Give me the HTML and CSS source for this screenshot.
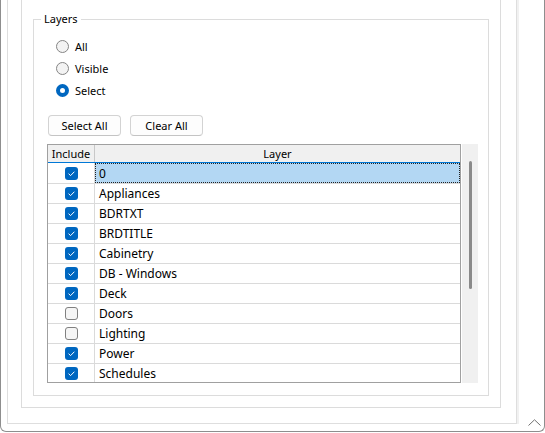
FILE: index.html
```html
<!DOCTYPE html>
<html>
<head>
<meta charset="utf-8">
<link rel="stylesheet" href="styles.css">
</head>
<body>
<div class="window">
  <div class="panel">
    <div class="inner">
      <fieldset class="group">
        <legend>Layers</legend>
        <div class="gbody">
          <div class="radios">
            <label class="radio"><span class="rb"></span>All</label>
            <label class="radio"><span class="rb"></span>Visible</label>
            <label class="radio"><span class="rb on"></span>Select</label>
          </div>
          <div class="buttons">
            <button class="btn">Select All</button>
            <button class="btn">Clear All</button>
          </div>
          <div class="grid">
            <div class="table">
              <div class="row head"><div class="c1">Include</div><div class="c2">Layer</div></div>
              <div class="row first"><div class="c1"><span class="cb on"><svg viewBox="0 0 13 13"><polyline points="3.6,6.7 5.6,8.6 9.4,4.7"/></svg></span></div><div class="c2 sel">0</div></div>
              <div class="row"><div class="c1"><span class="cb on"><svg viewBox="0 0 13 13"><polyline points="3.6,6.7 5.6,8.6 9.4,4.7"/></svg></span></div><div class="c2">Appliances</div></div>
              <div class="row"><div class="c1"><span class="cb on"><svg viewBox="0 0 13 13"><polyline points="3.6,6.7 5.6,8.6 9.4,4.7"/></svg></span></div><div class="c2">BDRTXT</div></div>
              <div class="row"><div class="c1"><span class="cb on"><svg viewBox="0 0 13 13"><polyline points="3.6,6.7 5.6,8.6 9.4,4.7"/></svg></span></div><div class="c2">BRDTITLE</div></div>
              <div class="row"><div class="c1"><span class="cb on"><svg viewBox="0 0 13 13"><polyline points="3.6,6.7 5.6,8.6 9.4,4.7"/></svg></span></div><div class="c2">Cabinetry</div></div>
              <div class="row"><div class="c1"><span class="cb on"><svg viewBox="0 0 13 13"><polyline points="3.6,6.7 5.6,8.6 9.4,4.7"/></svg></span></div><div class="c2">DB - Windows</div></div>
              <div class="row"><div class="c1"><span class="cb on"><svg viewBox="0 0 13 13"><polyline points="3.6,6.7 5.6,8.6 9.4,4.7"/></svg></span></div><div class="c2">Deck</div></div>
              <div class="row"><div class="c1"><span class="cb"></span></div><div class="c2">Doors</div></div>
              <div class="row"><div class="c1"><span class="cb"></span></div><div class="c2">Lighting</div></div>
              <div class="row"><div class="c1"><span class="cb on"><svg viewBox="0 0 13 13"><polyline points="3.6,6.7 5.6,8.6 9.4,4.7"/></svg></span></div><div class="c2">Power</div></div>
              <div class="row"><div class="c1"><span class="cb on"><svg viewBox="0 0 13 13"><polyline points="3.6,6.7 5.6,8.6 9.4,4.7"/></svg></span></div><div class="c2">Schedules</div></div>
            </div>
            <div class="vscroll"><div class="thumb"></div></div>
          </div>
        </div>
      </fieldset>
    </div>
  </div>
  <div class="strip"></div>
  <div class="side">
    <svg class="chev" viewBox="0 0 13 7"><polyline points="0.5,6.5 6.5,0.8 12.5,6.5"/></svg>
  </div>
</div>
</body>
</html>
```
FILE: styles.css
```css
html, body {
  margin: 0;
  padding: 0;
  background: #ffffff;
}
body {
  width: 545px;
  height: 433px;
  overflow: hidden;
  font-family: "Noto Sans", sans-serif;
  font-size: 11px;
  color: #000;
}
.window {
  display: flex;
  width: 545px;
  height: 432px;
  box-sizing: border-box;
  border: 1px solid #8e8e8e;
  border-top: none;
  border-radius: 0 0 6px 6px;
}
.panel {
  flex: none;
  margin-left: 6px;
  width: 510px;
  height: 424px;
  box-sizing: border-box;
  border: 1px solid #dedede;
  border-top: none;
  padding: 0 15px 15px 13px;
}
.strip {
  flex: none;
  width: 2px;
  height: 424px;
  background: #f1f1f1;
}
.side {
  flex: 1;
  display: flex;
  align-items: flex-end;
  padding: 0 0 5px 9px;
}
.chev {
  width: 13px;
  height: 7px;
  fill: none;
  stroke: #707070;
  stroke-width: 1;
}
.inner {
  height: 100%;
  box-sizing: border-box;
  border: 1px solid #dcdcdc;
  border-top: none;
  padding: 11px;
}
.group {
  margin: 0;
  padding: 0;
  height: 100%;
  box-sizing: border-box;
  border: 1px solid #dcdcdc;
  min-width: 0;
}
.group legend {
  margin-left: 7px;
  padding: 0 3px;
  line-height: 16px;
  font-size: 11px;
}
.gbody {
  padding: 8px 0 0 13px;
}
.radios {
  padding-left: 9px;
}
.radio {
  display: flex;
  align-items: center;
  gap: 6px;
  height: 22px;
}
.rb {
  width: 13px;
  height: 13px;
  box-sizing: border-box;
  border-radius: 50%;
  border: 1px solid #858585;
  background: #f3f3f3;
}
.rb.on {
  border: 4px solid #0067c0;
  background: #ffffff;
}
.buttons {
  display: flex;
  gap: 9px;
  margin: 14px 0 0 1px;
}
.btn {
  width: 73px;
  height: 21px;
  box-sizing: border-box;
  border: 1px solid #d3d3d3;
  border-bottom-color: #c4c4c4;
  border-radius: 4px;
  background: #fdfdfd;
  font-family: "Noto Sans", sans-serif;
  font-size: 11px;
  color: #000;
  padding: 0;
}
.grid {
  display: flex;
  gap: 1px;
  margin-top: 8px;
  height: 239px;
}
.table {
  width: 414px;
  box-sizing: border-box;
  border: 1px solid #a0a0a0;
  overflow: hidden;
}
.vscroll {
  width: 16px;
  background: #f0f0f0;
  padding-top: 17px;
  display: flex;
  justify-content: center;
}
.thumb {
  width: 3px;
  height: 128px;
  border-radius: 1.5px;
  background: #8a8a8a;
}
.row {
  display: flex;
  height: 20px;
  box-sizing: border-box;
  border-bottom: 1px solid #dadada;
  font-size: 12px;
}
.row.first {
  height: 21px;
}
.row.head {
  height: 18px;
  background: #f0f0f0;
  border-bottom: 1px solid #0078d7;
  font-size: 11px;
}
.c1 {
  flex: none;
  width: 46px;
  border-right: 1px solid #dadada;
  display: flex;
  align-items: center;
  justify-content: center;
}
.head .c1 {
  border-right-color: #c8c8c8;
}
.c2 {
  flex: 1;
  display: flex;
  align-items: center;
  padding-left: 4px;
}
.head .c2 {
  justify-content: center;
  padding-left: 0;
}
.c2.sel {
  background: #b3d7f3;
  outline: 1px dotted #222;
  outline-offset: -1px;
}
.cb {
  width: 13px;
  height: 13px;
  box-sizing: border-box;
  border-radius: 3px;
  border: 1px solid #808080;
  background: #f5f5f5;
  margin-left: 1px;
}
.cb.on {
  border: none;
  background: #0067c0;
}
.cb svg {
  display: block;
  width: 13px;
  height: 13px;
  fill: none;
  stroke: #ffffff;
  stroke-width: 1;
}
```
